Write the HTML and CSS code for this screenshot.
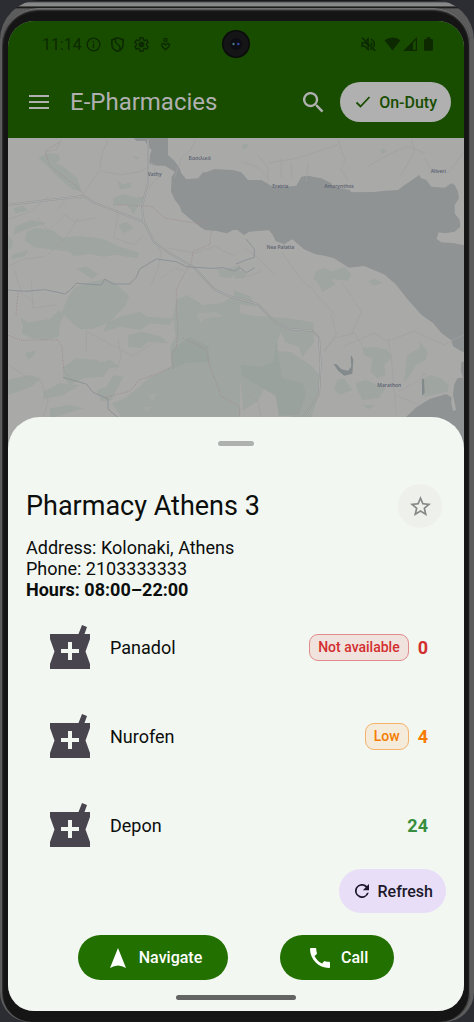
FILE: index.html
```html
<!DOCTYPE html>
<html lang="en">
<head>
<meta charset="utf-8">
<meta name="viewport" content="width=device-width, initial-scale=1">
<title>E-Pharmacies</title>
<link rel="stylesheet" href="styles.css">
</head>
<body>
<div class="device">
<div class="bezel">
<div class="screen">
  <header class="top">
    <div class="status">
      <div class="status-left">
        <span class="time">11:14</span>
        <svg class="s16" viewBox="0 0 24 24"><path d="M11 17h2v-6h-2zm1-15A10 10 0 1 0 12 22 10 10 0 0 0 12 2zm0 18a8 8 0 1 1 0-16 8 8 0 0 1 0 16zM11 9h2V7h-2z"/></svg>
        <svg class="s16" viewBox="0 0 24 24"><path d="M12 2.500 4 5.500v6c0 5 3.400 8.600 8 10 4.600-1.400 8-5 8-10v-6z" fill="none" stroke="currentColor" stroke-width="2.200"/><path d="M9.500 4c-1.500 4 0 6 3 8s4 4 2.500 7.500" fill="none" stroke="currentColor" stroke-width="2"/></svg>
        <svg class="s16" viewBox="0 0 24 24"><path d="M10 2.500h4l.6 2.900 1.900 1.100 2.800-1 2 3.500-2.200 1.900v2.200l2.200 1.900-2 3.500-2.800-1-1.900 1.100-.6 2.900h-4l-.6-2.900-1.900-1.100-2.800 1-2-3.500 2.200-1.900v-2.200L2.700 9l2-3.500 2.800 1 1.900-1.100z" fill="none" stroke="currentColor" stroke-width="2"/><circle cx="12" cy="12" r="4.200"/></svg>
        <svg class="s16" viewBox="0 0 24 24"><circle cx="12" cy="5.500" r="2.300" fill="none" stroke="currentColor" stroke-width="1.800"/><path d="M12 19.500 7 14.500c-2-2.500 1.500-5.500 4-3l1 1 1-1c2.500-2.500 6 .5 4 3z" fill="none" stroke="currentColor" stroke-width="2"/></svg>
      </div>
      <div class="status-right">
        <svg class="s16" viewBox="0 0 24 24"><path d="M3 2.500 21.500 21M3 9.500v5h4l4.500 4.500V13L8 9.500zM9 6.500 11.500 4v5M15 9c1.500 1 2 3 1.500 4.500M15.500 4.500c4.500 2 6 7 3.500 11.500M14 19c.8-.2 1.500-.5 2-1" fill="none" stroke="currentColor" stroke-width="2"/></svg>
        <svg class="wifi" viewBox="0 0 18 15"><path d="M9 14.500.5 3.500a13.500 13.500 0 0 1 17 0z"/></svg>
        <svg class="signal" viewBox="0 0 14 14"><path d="M14 0v14H0zm-1.200 3L10 5.800v7h2.800z" fill-rule="evenodd"/></svg>
        <svg class="battery" viewBox="0 0 10 15"><path d="M3 0h4v2h1.500Q10 2 10 3.500v10Q10 15 8.500 15h-7Q0 15 0 13.500v-10Q0 2 1.500 2H3z"/></svg>
      </div>
      <svg class="camera" viewBox="0 0 28 28"><circle cx="14" cy="14" r="14" fill="#0a0c0a"/><circle cx="14" cy="14" r="12.500" fill="#151518"/><circle cx="14" cy="14" r="6" fill="#0c0d14"/><circle cx="11.500" cy="14" r="1.200" fill="#4e7480"/><circle cx="16.300" cy="14" r="1.300" fill="#3444a0"/></svg>
    </div>
    <div class="appbar">
      <button class="icon-btn" aria-label="Menu"><svg class="menu" viewBox="0 0 20 14"><path d="M0 0h20v2H0zM0 6h20v2H0zM0 12h20v2H0z"/></svg></button>
      <h1>E-Pharmacies</h1>
      <button class="icon-btn" aria-label="Search"><svg class="search" viewBox="3 3 18 18"><path d="M15.500 14h-.79l-.28-.27A6.500 6.500 0 1 0 13.730 14.430l.27.28v.79l5 4.990L20.490 19zm-6 0a4.500 4.500 0 1 1 0-9 4.500 4.500 0 0 1 0 9z"/></svg></button>
      <button class="duty"><svg viewBox="0 0 16 14"><path d="m1.500 7.500 4 4L14.500 2" fill="none" stroke="currentColor" stroke-width="1.800"/></svg>On-Duty</button>
    </div>
  </header>

  <div class="map">
    <svg viewBox="0 0 1368 936" preserveAspectRatio="xMidYMin slice" role="img" aria-label="Map of the Athens region">
      <rect width="1368" height="936" fill="#a9a9a8"/>
      <g fill="#9fa5a0">
        <g transform="translate(-24 -9)">
          <path d="M115 68l25-13 35 2 6 18-14 10 28 14 36 30 15 42-30-8-46-40-24-26zM80 290l28-12 50 8 30 22 50-5 70 8 45 22 65 20-6 16-70-10-30 6-40-8-50 6-20-14-50-6-48-6-30-20zM45 275l50-20 45 10-50 14-50 20zM24 300l15 20-4 20-11 5zM35 360l50-15-10 18-40 10zM40 220l30-8 15 15-40 8zM350 135l20 15 25-10-3 18-32 4zM340 190l30-12 40 10 30-5-25 30-15 25-20-30-40 5zM355 270l25-10 20 20-30 15zM230 400l30-5 35 22-20 14zM400 62l18 6-8 8zM650 400l25 5 45-15v20l-30 20-30-5z"/>
        </g>
        <g transform="translate(-24 426)">
          <path d="M205 50l20-28 35-12 50-12 35 10 20 20 22 20-10 30-22 20-25 28-50 20-40 2-30-25-25-25zM60 112l25 15 65-10 25-25 20 8-15 30-5 40-40 10-40-5-30-15 5-20zM360 110l60-15 20 15 80 5-10 20-60-5-30 20-60-10-50 15 10-25zM385 165l40-10 60 15 20 20-60-5-20 20-40-5zM190 260l40-25 60 5 40 20-20 30-60 5-40 20-20-25zM24 300l60-15 40 10-30 25-70 25zM130 335l50-25 60 5-50 30-60 12zM150 385l60-10 40 10-50 15-50 15zM290 330l30-10 20-35 30 5-20 40-15 30-30 5zM75 220l35-10-10 15-15 15zM250 260l80-20 30 20-60 10z"/>
          <path d="M530 60l30-15 50 30 50-5 60-30v370H365l-30-40 40-15 50-40 20-20 70-35-4-60 16-30-8-60z"/>
          <path d="M515 210l55-38 55 28 4 45-70 3-43 20z" fill="#99a29c"/>
          <path d="M590 100l60-5 20 15-50 5-20 15zM440 345l30-5-10 25zM430 380l25 2-15 12z" fill="#a5a8a4"/>
        </g>
        <g transform="translate(678 426)">
          <path d="M-2 95l60 12 100 8 80 12 2 60-35 45-10-30-40-15-15-30-10 25 2 30 40 5 60 40 30 35-10 60-20 60-60 0-20-90-60 0-20 40-44 30zM0 30l50 20 15 30-65-10zM385 205l35-5 40 10 15 20-25 25 5 30-25 10-20-20 5-40-25-10zM515 265l5-40 35-20 5-20 20 30-5 25-30 15-20 35-15 15zM560 305l30-20 30 10 25 20-5 20-70 15zM310 300l20-5 25 35-40 15-15-20zM365 310l30-10 60 25-20 30-50 5-15-30zM385 375l40 0-20 12zM250 5l40-8 15 15-40 25z"/>
          <path d="M20 255l60 5 40-15 5-60 20 110 60 15 10 30-20 65-60 3-10-60-50-30-50-30z" fill="#99a29c"/>
        </g>
        <path d="M701 22l15-6 6 10-16 8zM1115 36l12-5 8 10-12 8zM925 400l25-10 20 10 40-12 20 20-10 20-50-5-20 20-35-20zM680 410l22-12 14 10-10 12-26 2zM1080 430l20-7 25 12-30 8z"/>
      </g>
      <g fill="#8f9394">
        <path d="M376 0l10 9h25l10 17 10 10-5 15-2 25 22 7h25l20 13 10 5-10 15-2 45 12 25 15 20 5 15 30 25 25 20 15 10 35 3 30 7 20-10h12l20 15 15-10 60-4 10 12 10 20 25 10 25-15 35 30 35 15 30 5 25 7 45 28 45-5 60 25 35 30 37 46 40 45 35 25 25 30 30 22 5 18 25 15 23 5v20l-23 8-2 27 7 17 30 6V308l-30 13-30-6-35-2-14-10 6-20 18 3 30-5 17-15-2-20-15-20v-25l13-20-3-20-10-20-10-5-20 13-40-3-15-20-15-5-7-10-13 10-30 20-20 15-40 2-30 4-70 1-5-7-50-10-5-10-30-15-40-8-20 3-15 27-25 3h-45l-35-20h-40l-20-23-25-7-55-3-25 10h-10l-15 18-35 3-15-18-5-15-15-22-20-18V0z"/>
        <path d="M1195 836l30-28 40-25 50-15 15 10v20l6 22 8-5-4-20-5-24 3-30 10-20 20-3v260h-180z"/>
        <path d="M976 677l10 2 14 15 20 4 10-12-2-28 3-6 5 15-3 40-24 6-18-14zM1242 722h6l2 42-8 10z" fill="#838a8c"/>
      </g>
      <g fill="none" stroke="#a0a0a1" stroke-width="2">
        <path d="M160 5l-15 30-30 5M300 5l-20 50-5 40-20 30-40 60M0 245l70-25 50-45M150 215l30-40M90 240l30 40 50-50 30 20 60-10M0 385l40-20 70-10M20 395l20 70 40 30M120 350l60-60 30-50M280 100l60 10 60-10 30-20M430 70l20 50-30 30M500 120l20-60 25-20 20-35M330 220l-12 80 60 20 30-30M430 300l30 40-10 50-20 50M480 330l80 15 60-20 60 30M460 420l40-30 30 10M700 70l50 20 30 30M750 50l30 40 0 40M820 60v60M850 75l2 50M900 75l-5 55M780 75l90-15 120-40M990 5l20 60-10 30 20 35M1080 85l70-40 50-20 50 20M1250 60l20 35 50 10 45-60M1180 110l40-70-10-35M710 330l40 30 50 50M820 340l30 45 50 60M760 400l-60 20M0 680l60 40 40 10 20 60-30 100M70 430l5 80 70-10M235 580v60M235 580l140 75 60-40M330 600l10 60-20 40M1368 590l-60 30-90-40-80 30-40-25-90 40M970 530l15 60-40 50M950 640l30-40 60-15 30 50M1140 600l10 60 15 170M1170 760l60-30 20-25 12 60M1160 770l70 30M1000 430l60 90-30 70M900 440l80 90M910 780l-60 60M720 770l30 20 10 60"/>
      </g>
      <g fill="none" stroke="#959798" stroke-width="6" stroke-linejoin="round"><path d="M0 200l228-26 30 20 150 58 30 60 50 36 70 40 60 65 40 20 90 25 55 55 40 20 70 5 20 20 5 80-5 90-50 75M420 5v60l0 70-18 70 5 44"/></g>
      <g fill="none" stroke="#abacac" stroke-width="3" stroke-linejoin="round"><path d="M0 200l228-26 30 20 150 58 30 60 50 36 70 40 60 65 40 20 90 25 55 55 40 20 70 5 20 20 5 80-5 90-50 75M420 5v60l0 70-18 70 5 44"/></g>
      <g fill="none" stroke="#8d9297" stroke-width="3" stroke-linejoin="round">
        <path d="M0 456l50 4 60-5 40 8 20 5 15-10 20-22 75 5 10-18 25 15 50 0 20-20 10-25 50-30 60 8 30 15 75 5 35-2 35 10 15-10 20 15 25-15M684 378l30-12 25-8 0-25-25-30M165 718l70 20 20 25 45 20 0 30 30 26"/>
      </g>
      <g fill="none" stroke="#a08e8e" stroke-width="3" stroke-dasharray="3 4">
        <path d="M156 12l-45 28 15 45 80 60 20 25M330 200l100 5 40 35 90 15 50-5M610 280l-5 40-50 20-5 35-20 30-25 50 0 50 5 70-5 50-15 30 5 30-55 25-45 15-30 35-80 20M0 592l40 15 110-2 12 20 5 70 15 20M30 460l-6 75M525 600l70 35 10 50 20 50 15 40 55 30 0 40"/>
      </g>
      <g class="place">
        <text x="575" y="66" text-anchor="middle">Βασιλικό</text>
        <text x="440" y="114" text-anchor="middle">Vathy</text>
        <text x="817" y="150" text-anchor="middle">Eretria</text>
        <text x="993" y="151" text-anchor="middle">Amarynthos</text>
        <text x="1291" y="106" text-anchor="middle">Aliveri</text>
        <text x="817" y="334" text-anchor="middle">Nea Palatia</text>
        <text x="1144" y="747" text-anchor="middle">Marathon</text>
      </g>
    </svg>
  </div>

  <main class="sheet">
    <div class="handle"></div>
    <div class="heading">
      <h2>Pharmacy Athens 3</h2>
      <button class="star" aria-label="Add to favourites"><svg viewBox="2 2 20 19"><path d="m22 9.240-7.190-.62L12 2 9.190 8.630 2 9.240l5.460 4.730L5.820 21 12 17.270 18.180 21l-1.630-7.030zM12 15.400l-3.760 2.270 1-4.280-3.320-2.880 4.380-.38L12 6.100l1.710 4.040 4.380.38-3.320 2.880 1 4.280z"/></svg></button>
    </div>
    <div class="info">
      <p>Address: Kolonaki, Athens</p>
      <p>Phone: 2103333333</p>
      <p class="strong">Hours: 08:00–22:00</p>
    </div>
    <ul class="stock">
      <li>
        <svg class="mortar" viewBox="0 0 40 44"><path d="M0 9h28.500L32 0l5 2-2.500 7H40v5l-4.500 12.500L40 39v5H0v-5l4.500-12.500L0 14z"/><path d="M18 17h4v7h7v4h-7v7h-4v-7h-7v-4h7z" fill="#f2f7f2"/></svg>
        <span class="name">Panadol</span><span class="badge none">Not available</span><span class="count red">0</span>
      </li>
      <li>
        <svg class="mortar" viewBox="0 0 40 44"><path d="M0 9h28.500L32 0l5 2-2.500 7H40v5l-4.500 12.500L40 39v5H0v-5l4.500-12.500L0 14z"/><path d="M18 17h4v7h7v4h-7v7h-4v-7h-7v-4h7z" fill="#f2f7f2"/></svg>
        <span class="name">Nurofen</span><span class="badge low">Low</span><span class="count orange">4</span>
      </li>
      <li>
        <svg class="mortar" viewBox="0 0 40 44"><path d="M0 9h28.500L32 0l5 2-2.500 7H40v5l-4.500 12.500L40 39v5H0v-5l4.500-12.500L0 14z"/><path d="M18 17h4v7h7v4h-7v7h-4v-7h-7v-4h7z" fill="#f2f7f2"/></svg>
        <span class="name">Depon</span><span class="count green">24</span>
      </li>
    </ul>
    <button class="refresh"><svg viewBox="4 4 16 16"><path d="M17.650 6.350A8 8 0 1 0 19.730 14h-2.080A6 6 0 1 1 12 6c1.660 0 3.140.69 4.220 1.780L13 11h7V4z"/></svg>Refresh</button>
    <div class="actions">
      <button class="action"><svg viewBox="0 0 20 20"><path d="M10 0l8 20q-8-5-16 0z"/></svg>Navigate</button>
      <button class="action"><svg viewBox="3 3 18 18"><path d="M20.010 15.380c-1.230 0-2.420-.2-3.530-.56a.98.980 0 0 0-1.010.24l-1.570 1.970c-2.830-1.350-5.480-3.900-6.890-6.830l1.950-1.660c.27-.28.35-.67.24-1.020-.37-1.110-.56-2.300-.56-3.530 0-.54-.45-.99-.99-.99H4.190C3.650 3 3 3.240 3 3.990 3 13.280 10.730 21 20.010 21c.71 0 .99-.63.99-1.180v-3.450c0-.54-.45-.99-.99-.99z"/></svg>Call</button>
    </div>
    <div class="home"></div>
  </main>
</div>
</div>
</div>
</body>
</html>
```
FILE: styles.css
```css
* { box-sizing: border-box; }
body {
  margin: 0;
  background: #2b2d32;
  font-family: Roboto, "Liberation Sans", sans-serif;
  color: #0c0e0c;
}
h1, h2, p, ul { margin: 0; padding: 0; font-weight: 400; }
button { border: 0; font: inherit; cursor: pointer; display: flex; align-items: center; padding: 0; }
svg { display: block; flex: none; fill: currentColor; }

.device {
  display: flex;
  min-height: 100vh;
  padding: 8px 4px 0 2px;
  border-radius: 40px 40px 30px 30px;
  background: linear-gradient(#1a1a1a 0, #1a1a1a 1px, #85878a 3px, #8a8a88 6px, #080808 7px, #5c5c5c 9px, #5c5c5c 100%);
}
.bezel {
  display: flex;
  flex: 1;
  padding: 13px 6px 11px;
  border-radius: 36px 36px 30px 30px;
  background: #151515;
  box-shadow: inset 0 2px 2px #777, inset -1px 0 1px #444;
}
.screen {
  display: flex;
  flex: 1;
  flex-direction: column;
  min-width: 0;
  overflow: hidden;
  border-radius: 26px;
  background: #8f9394;
}

.top { background: #184d00; padding-bottom: 16px; color: #b0b0b0; }
.status {
  position: relative;
  display: flex;
  justify-content: space-between;
  align-items: center;
  height: 46px;
  padding: 0 31px 0 34px;
  color: #0c2900;
}
.status-left, .status-right { display: flex; align-items: center; }
.status-left { gap: 7px; }
.time { font-size: 16px; margin-right: -4px; }
.s16 { width: 17px; height: 17px; }
.wifi { width: 17px; height: 14px; margin-left: 7px; }
.signal { width: 14px; height: 14px; margin-left: 2px; }
.battery { width: 9px; height: 14px; margin-left: 7px; }
.camera { position: absolute; left: 50%; top: 9px; width: 28px; height: 28px; margin-left: -14px; }
.appbar { display: flex; align-items: center; margin-top: 15px; padding: 0 13px 0 21px; height: 40px; }
.appbar h1 { flex: 1; margin-left: 21px; font-size: 24px; line-height: 30px; }
.icon-btn { background: none; color: #b0b0b0; }
.menu { width: 20px; height: 14px; }
.search { width: 21px; height: 21px; }
.duty {
  gap: 8px;
  height: 40px;
  margin-left: 16px;
  padding: 0 14px 0 15px;
  border-radius: 20px;
  background: #b0b0b0;
  color: #184d00;
  font-size: 16px;
  font-weight: 500;
}
.duty svg { width: 16px; height: 14px; }

.map { position: relative; flex: 1; min-height: 312px; background: #a9a9a8; }
.map svg { width: 100%; height: 312px; }
.place { fill: #596270; font-family: "Open Sans", sans-serif; font-size: 15px; font-weight: 600; }

.sheet {
  position: relative;
  display: flex;
  flex-direction: column;
  margin-top: -33px;
  padding: 24px 18px 11px;
  border-radius: 32px 32px 0 0;
  background: #f2f7f2;
}
.handle { align-self: center; width: 36px; height: 5px; border-radius: 3px; background: #aeb1ae; }
.heading { display: flex; justify-content: space-between; align-items: center; margin-top: 38px; padding-right: 4px; }
.heading h2 { font-size: 27px; line-height: 32px; }
.star { justify-content: center; width: 44px; height: 44px; border-radius: 50%; background: #eef0ec; color: #878887; }
.star svg { width: 21px; height: 20px; }
.info { margin-top: 9px; font-size: 18px; line-height: 21px; }
.strong { font-weight: 700; }
.stock { display: flex; flex-direction: column; gap: 45px; margin-top: 25px; padding: 0 18px 0 24px; list-style: none; }
.stock li { display: flex; align-items: center; height: 44px; }
.mortar { width: 40px; height: 44px; color: #49454f; }
.name { flex: 1; margin-left: 20px; font-size: 18px; }
.badge { padding: 0 8px; border: 1px solid; border-radius: 9px; font-size: 14px; font-weight: 500; line-height: 25px; }
.none { border-color: #e28b8b; background: #f0e3de; color: #d32f2f; }
.low { border-color: #f4b26a; background: #f4ebda; color: #f57c00; }
.count { margin-left: 9px; font-size: 18px; font-weight: 700; }
.red { color: #d32f2f; }
.orange { color: #f57c00; }
.green { color: #388e3c; }
.refresh {
  align-self: flex-end;
  gap: 9px;
  height: 44px;
  margin-top: 22px;
  padding: 0 13px 0 16px;
  border-radius: 22px;
  background: #e8def8;
  color: #1d192b;
  font-size: 16px;
  font-weight: 500;
}
.refresh svg { width: 14px; height: 14px; }
.actions { display: flex; justify-content: space-evenly; margin-top: 22px; }
.action {
  gap: 11px;
  height: 45px;
  padding: 0 26px 0 30px;
  border-radius: 23px;
  background: #227000;
  color: #fff;
  font-size: 16px;
  font-weight: 500;
}
.action svg { width: 20px; height: 20px; }
.home { align-self: center; width: 120px; height: 5px; margin-top: 15px; border-radius: 3px; background: #636562; }
```
